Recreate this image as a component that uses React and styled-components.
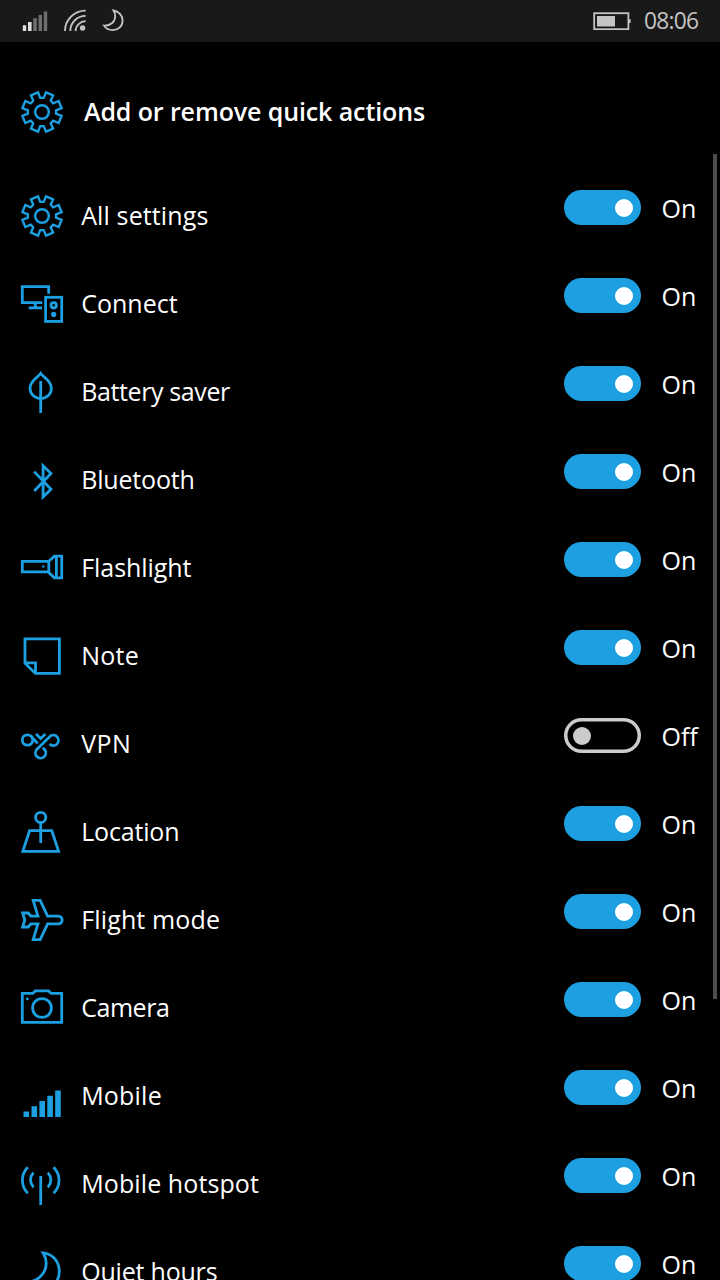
import React from 'react'
import styled, { createGlobalStyle, css, ThemeProvider } from 'styled-components'

const theme = {
  background: '#000',
  statusBar: '#191919',
  accent: '#1ca0e2',
  text: '#fff',
  muted: '#ccc',
  status: '#c4c4c4',
  scrollbar: '#4d4d4d',
  font: "'Open Sans', 'Noto Sans', sans-serif",
}

const GlobalStyle = createGlobalStyle`
  body {
    margin: 0;
    background: #000;
  }
`

const Phone = styled.div`
  position: relative;
  display: flex;
  flex-direction: column;
  width: 720px;
  height: 1280px;
  overflow: hidden;
  background: ${props => props.theme.background};
  color: ${props => props.theme.text};
  font-family: ${props => props.theme.font};
`

const StatusBar = styled.header`
  flex: none;
  display: flex;
  align-items: center;
  justify-content: space-between;
  box-sizing: border-box;
  height: 42px;
  padding: 0 22px;
  background: ${props => props.theme.statusBar};
  color: ${props => props.theme.status};
`

const StatusGroup = styled.div`
  display: flex;
  align-items: center;
  gap: ${props => props.$gap}px;
`

const StatusIcon = styled.svg`
  display: block;
  fill: none;
  stroke: currentColor;
  stroke-width: 1.8;
`

const Clock = styled.time`
  width: 54px;
  font-size: 22.8px;
  line-height: 42px;
  letter-spacing: -0.8px;
  white-space: nowrap;
`

const Title = styled.div`
  flex: none;
  display: flex;
  align-items: center;
  height: 88px;
  margin: 26px 0 16px;
  padding-left: 18px;
`

const TitleText = styled.h1`
  margin: 0 0 2px 18px;
  font-size: 25px;
  font-weight: 600;
  line-height: 34px;
  letter-spacing: -0.11px;
`

const List = styled.ul`
  flex: none;
  margin: 0;
  padding: 0;
  list-style: none;
`

const Row = styled.li`
  display: flex;
  align-items: center;
  height: 88px;
  padding-left: 18px;
`

const RowIcon = styled.svg`
  flex: none;
  display: block;
  width: 48px;
  height: 48px;
  fill: none;
  stroke: ${props => props.theme.accent};
  stroke-width: 2.8;

  .solid {
    fill: ${props => props.theme.accent};
    stroke: none;
  }
`

const Label = styled.span`
  flex: 1;
  margin: 0 0 2px 15.2px;
  font-size: 25px;
  line-height: 34px;
  letter-spacing: ${props => props.$tracking || 0}px;
`

const Switch = styled.span`
  flex: none;
  display: flex;
  align-items: center;
  justify-content: flex-end;
  box-sizing: border-box;
  width: 77px;
  height: 35px;
  margin-bottom: 17px;
  padding: 0 8px;
  border-radius: 18px;
  background: ${props => props.theme.accent};

  ${props =>
    !props.$on &&
    css`
      justify-content: flex-start;
      padding: 0 9px;
      background: none;
      box-shadow: inset 0 0 0 3.5px ${props.theme.muted};
    `}
`

const Knob = styled.i`
  width: 18px;
  height: 18px;
  margin-top: 1px;
  border-radius: 50%;
  background: ${props => (props.$on ? props.theme.text : props.theme.muted)};
`

const State = styled.span`
  flex: none;
  width: 58.5px;
  margin: 0 0 16px 20.5px;
  font-size: 25px;
  line-height: 34px;
`

const Scrollbar = styled.div`
  position: absolute;
  top: 154px;
  right: 3px;
  width: 4px;
  height: 845px;
  background: ${props => props.theme.scrollbar};
`

// point on a circle round 24,24, angle in degrees from the top
const polar = (r, deg) => {
  const a = (deg * Math.PI) / 180
  return `${(24 + r * Math.sin(a)).toFixed(2)} ${(24 - r * Math.cos(a)).toFixed(2)}`
}

const gearPath = `M${[0, 45, 90, 135, 180, 225, 270, 315]
  .map(a => [polar(20, a - 11.5), polar(14.2, a - 7), polar(14.2, a + 7), polar(20, a + 11.5)].join('L'))
  .join('L')}Z`

const icons = {
  gear: (
    <>
      <path d={gearPath} strokeWidth="2.4" />
      <circle cx="24" cy="24" r="6.8" strokeWidth="2.5" />
    </>
  ),
  connect: (
    <>
      <path d="M24.3 22.7H4.3V6.7H30.7V13.8M17.3 22.7V28M10.7 27.9H24" />
      <rect x="27.6" y="17.3" width="16.1" height="24.1" />
      <circle cx="35.7" cy="25.3" r="2.7" />
      <circle className="solid" cx="35.7" cy="34.4" r="2.6" />
    </>
  ),
  leaf: (
    <path d="M22.7 5.4C25 9.2 33.4 12.6 33.4 20.3A10.7 10.3 0 0 1 12 20.3C12 12.6 20.4 9.2 22.7 5.4ZM22.7 13V45" />
  ),
  bluetooth: <path d="M16.2 15.6L33 33.3L25.1 41V9.8L33 17.5L16.2 35" />,
  flashlight: (
    <>
      <path d="M30.8 17.3H4.3V27.9H30.8M30.8 16.6V28.6L36.4 33.8H43.7V12.2H36.4L30.8 17.3M38.4 12V34" />
      <circle className="solid" cx="25.3" cy="22.5" r="1.2" />
    </>
  ),
  note: <path d="M7 6.8H41.4V41.4H17.4L7 31.2ZM7 30.9H17.5V41.4" />,
  vpn: (
    <>
      <circle cx="9.5" cy="20" r="5.2" />
      <path d="M13 16.2L19.7 23.4M18 14L22.7 18.6L27.4 14" />
      <path d="M31.6 24A5.2 5.2 0 1 0 32.2 16.2L18.9 29.3A5.2 5.2 0 1 0 26.5 29.5L24.8 27.6" />
    </>
  ),
  location: (
    <>
      <circle cx="22.7" cy="9.4" r="5.1" />
      <path d="M22.7 14.6V35M11.6 22.7H33.8L40.6 43.4H4.8Z" />
    </>
  ),
  flight: (
    <path d="M40.4 20.2H29.6L22.2 4.3H15.2L19.9 20.2H12.9L10.2 17H4.6L6.8 24L4.6 31H10.2L12.9 27.8H19.9L15.2 43.7H22.2L29.6 27.8H40.4A3.8 3.8 0 0 0 40.4 20.2Z" />
  ),
  camera: (
    <>
      <path d="M4.3 9.4H14.8L17.4 6.9H30.6L33.2 9.4H43.7V38.4H4.3Z" />
      <circle cx="24" cy="24" r="9.4" />
      <circle className="solid" cx="9.4" cy="14.9" r="1.4" />
    </>
  ),
  mobile: <path className="solid" d="M5.5 39.5h5.6V45h-5.6zM13.5 34.2h5.6V45h-5.6zM21.4 29h5.6v16h-5.6zM29.3 23.8h5.6V45h-5.6zM37.2 18.6h5.6V45h-5.6z" />,
  hotspot: (
    <>
      <path d="M22.7 16V45" />
      <path d="M9.8 7.2C2.6 14.6 2.6 25.8 9.8 33.2M15.5 12.6C11.6 17 11.6 23 15.5 27.4" />
      <path d="M35.6 7.2C42.8 14.6 42.8 25.8 35.6 33.2M29.9 12.6C33.8 17 33.8 23 29.9 27.4" />
    </>
  ),
  moon: (
    <path d="M25.2 4.9C35.5 6 41.3 14.5 41.3 23.5C41.3 34.5 32.5 42.7 22 42.7C14 42.7 8 39.5 4.6 33.8C18.5 35.5 28.2 26 28.2 15.5C28.2 11.5 27.4 8.5 25.2 4.9Z" />
  ),
}

const actions = [
  { icon: 'gear', label: 'All settings', tracking: 0.12, on: true },
  { icon: 'connect', label: 'Connect', on: true },
  { icon: 'leaf', label: 'Battery saver', tracking: -0.38, on: true },
  { icon: 'bluetooth', label: 'Bluetooth', tracking: -0.18, on: true },
  { icon: 'flashlight', label: 'Flashlight', tracking: -0.05, on: true },
  { icon: 'note', label: 'Note', tracking: 0.25, on: true },
  { icon: 'vpn', label: 'VPN', tracking: 0.4, on: false },
  { icon: 'location', label: 'Location', tracking: -0.18, on: true },
  { icon: 'flight', label: 'Flight mode', tracking: 0.15, on: true },
  { icon: 'camera', label: 'Camera', tracking: -0.45, on: true },
  { icon: 'mobile', label: 'Mobile', tracking: 0.2, on: true },
  { icon: 'hotspot', label: 'Mobile hotspot', tracking: 0.1, on: true },
  { icon: 'moon', label: 'Quiet hours', tracking: -0.2, on: true },
]

const Icon = ({ name }) => <RowIcon viewBox="0 0 48 48">{icons[name]}</RowIcon>

const Status = () => (
  <StatusBar>
    <StatusGroup $gap={16}>
      <StatusIcon width="26" height="24" viewBox="0 0 26 24">
        <g stroke="none">
          <path fill="#e0e0e0" d="M.8 16.3h3.4V22H.8zM6 13h3.6v9H6z" />
          <path fill="#6e6e6e" d="M11.2 9.2h3.6V22h-3.6zM16.5 6h3.5v16h-3.5zM21.8 2.6h3.4V22h-3.4z" />
        </g>
      </StatusIcon>
      <StatusIcon width="22" height="24" viewBox="0 0 22 24">
        <path d="M1 22A20.5 20.5 0 0 1 21.7 1.6M6.3 22A15.2 15.2 0 0 1 21.7 6.9M11.6 22A10 10 0 0 1 21.7 12.2" />
        <circle cx="18.6" cy="19" r="2.7" fill="currentColor" stroke="none" />
      </StatusIcon>
      <StatusIcon width="22" height="24" viewBox="-.4 0 22 24">
        <path d="M11.1 1.5C16.2 2.2 20.2 6.2 20.2 11.4C20.2 17 16 21.1 10.5 21.1C6.6 21.1 3.4 19.5 1.6 16.6C8.4 17 12.8 12.4 12.8 7.2C12.8 5 12.2 3.2 11.1 1.5Z" />
      </StatusIcon>
    </StatusGroup>
    <StatusGroup $gap={13}>
      <StatusIcon width="38" height="18" viewBox="0 0 38 18">
        <rect x="1.2" y="1.2" width="34.2" height="16" />
        <path fill="currentColor" stroke="none" d="M4 4h18v10.6H4zM36 7.2h1.6v3.9H36z" />
      </StatusIcon>
      <Clock>08:06</Clock>
    </StatusGroup>
  </StatusBar>
)

export default () => (
  <ThemeProvider theme={theme}>
    <GlobalStyle />
    <Phone>
      <Status />
      <Title>
        <Icon name="gear" />
        <TitleText>Add or remove quick actions</TitleText>
      </Title>
      <List>
        {actions.map(({ icon, label, tracking, on }) => (
          <Row key={label}>
            <Icon name={icon} />
            <Label $tracking={tracking}>{label}</Label>
            <Switch $on={on}>
              <Knob $on={on} />
            </Switch>
            <State>{on ? 'On' : 'Off'}</State>
          </Row>
        ))}
      </List>
      <Scrollbar />
    </Phone>
  </ThemeProvider>
)
